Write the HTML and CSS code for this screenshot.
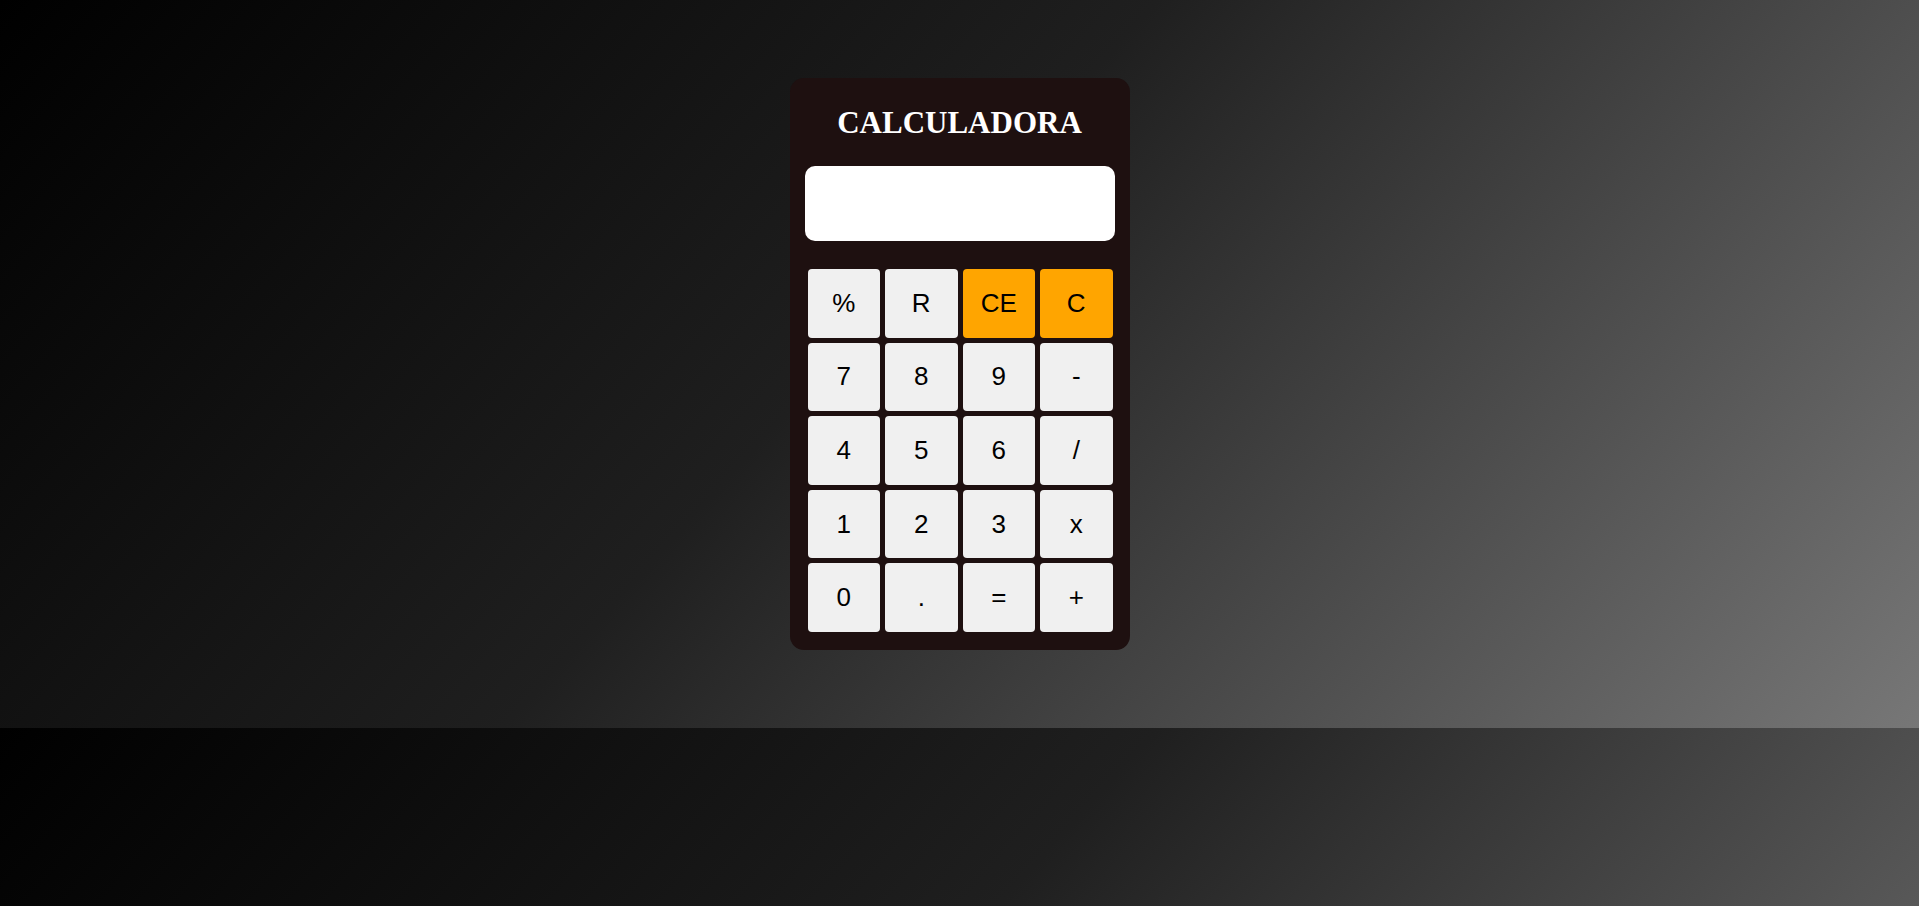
FILE: index.html
```html
<!DOCTYPE html>
<html lang="es">
<head>
<meta charset="utf-8">
<title>Calculadora</title>
<link rel="stylesheet" href="styles.css">
</head>
<body>
<main class="calc">
  <h1 class="calc-title">CALCULADORA</h1>
  <div class="calc-display"></div>
  <div class="calc-keys">
    <button class="key">%</button>
    <button class="key">R</button>
    <button class="key key-accent">CE</button>
    <button class="key key-accent">C</button>
    <button class="key">7</button>
    <button class="key">8</button>
    <button class="key">9</button>
    <button class="key">-</button>
    <button class="key">4</button>
    <button class="key">5</button>
    <button class="key">6</button>
    <button class="key">/</button>
    <button class="key">1</button>
    <button class="key">2</button>
    <button class="key">3</button>
    <button class="key">x</button>
    <button class="key">0</button>
    <button class="key">.</button>
    <button class="key">=</button>
    <button class="key">+</button>
  </div>
</main>
</body>
</html>
```

FILE: styles.css
```css
html {
  margin: 0;
}

body {
  margin: 0;
  min-height: 728px;
  box-sizing: border-box;
  padding-top: 78px;
  background: linear-gradient(132deg, #000000 0%, #1f1f1f 45%, #777777 100%);
  font-family: "Liberation Sans", Arial, sans-serif;
}

.calc {
  width: 340px;
  box-sizing: border-box;
  margin: 0 auto;
  padding: 0 15px 18px;
  background: #1e1010;
  border-radius: 14px;
  display: flex;
  flex-direction: column;
}

.calc-title {
  margin: 26px 0 0;
  font-family: "Liberation Serif", "Times New Roman", serif;
  font-size: 31px;
  font-weight: bold;
  line-height: 37px;
  color: #ffffff;
  text-align: center;
}

.calc-display {
  margin-top: 25px;
  height: 75px;
  background: #ffffff;
  border-radius: 10px;
}

.calc-keys {
  margin: 28px 2px 0 3px;
  display: grid;
  grid-template-columns: repeat(4, 1fr);
  grid-auto-rows: 68.6px;
  gap: 5px;
}

.key {
  border: none;
  border-radius: 4px;
  background: #f0f0f0;
  color: #000000;
  font-family: "Liberation Sans", Arial, sans-serif;
  font-size: 26px;
  padding: 0;
  margin: 0;
}

.key-accent {
  background: #ffa500;
}
```
